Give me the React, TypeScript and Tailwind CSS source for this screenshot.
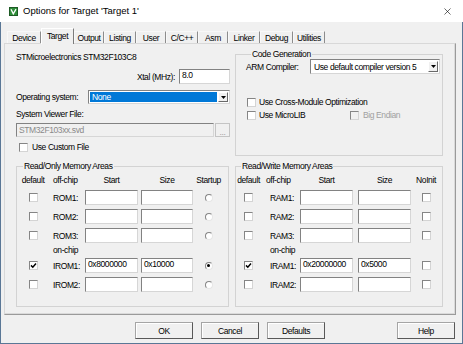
import React from 'react';
import { X } from 'lucide-react';

type Row = { label: string; start?: string; size?: string; def?: boolean; flag?: boolean };

const tabs = [
  { name: 'Device', w: 'w-[34px]' },
  { name: 'Target', w: 'w-[33px]' },
  { name: 'Output', w: 'w-[30px]' },
  { name: 'Listing', w: 'w-[32px]' },
  { name: 'User', w: 'w-[30px]' },
  { name: 'C/C++', w: 'w-[32px]' },
  { name: 'Asm', w: 'w-[30px]' },
  { name: 'Linker', w: 'w-[32px]' },
  { name: 'Debug', w: 'w-[33px]' },
  { name: 'Utilities', w: 'w-[32px]' },
];

const roOff: Row[] = [{ label: 'ROM1:' }, { label: 'ROM2:' }, { label: 'ROM3:' }];
const roOn: Row[] = [
  { label: 'IROM1:', start: '0x8000000', size: '0x10000', def: true, flag: true },
  { label: 'IROM2:' },
];
const rwOff: Row[] = [{ label: 'RAM1:' }, { label: 'RAM2:' }, { label: 'RAM3:' }];
const rwOn: Row[] = [
  { label: 'IRAM1:', start: '0x20000000', size: '0x5000', def: true },
  { label: 'IRAM2:' },
];

function Check({ checked = false, disabled = false }: { checked?: boolean; disabled?: boolean }) {
  return (
    <span
      className={`block w-[9px] h-[9px] border border-t-[#858585] border-l-[#858585] border-r-[#d4d4d4] border-b-[#d4d4d4] ${
        disabled ? 'bg-[#f0f0f0]' : 'bg-white'
      }`}
    >
      {checked && (
        <svg viewBox="0 0 7 7" className="block w-full h-full">
          <path d="M1 3.4 L2.8 5.2 L6 1.6" stroke="#000" strokeWidth="1.5" fill="none" />
        </svg>
      )}
    </span>
  );
}

function Radio({ checked = false }: { checked?: boolean }) {
  return (
    <span className="flex items-center justify-center w-[8px] h-[8px] rounded-full border border-t-[#858585] border-l-[#858585] border-r-[#e6e6e6] border-b-[#e6e6e6] bg-white">
      {checked && <span className="block w-[3px] h-[3px] rounded-full bg-black" />}
    </span>
  );
}

function Edit({ value, className = '', disabled = false }: { value?: string; className?: string; disabled?: boolean }) {
  return (
    <div
      className={`border border-t-[#828282] border-l-[#828282] border-r-[#d6d6d6] border-b-[#d6d6d6] pl-[2px] leading-[10px] overflow-hidden whitespace-nowrap ${
        disabled ? 'bg-[#f0f0f0] text-[#8a8a8a]' : 'bg-white'
      } ${className}`}
    >
      {value}
    </div>
  );
}

function Combo({ value, className = '', selected = false }: { value: string; className?: string; selected?: boolean }) {
  return (
    <div
      className={`flex border border-t-[#828282] border-l-[#828282] border-r-[#d6d6d6] border-b-[#d6d6d6] bg-white p-[1px] ${className}`}
    >
      <div className={`flex-1 flex items-center pl-[2px] ${selected ? 'bg-[#0078d7] text-white' : ''}`}>{value}</div>
      <div className="w-[10px] ml-[1px] flex items-center justify-center bg-[#f0f0f0] border border-t-white border-l-white border-r-[#696969] border-b-[#696969]">
        <svg width="5" height="3" viewBox="0 0 5 3">
          <path d="M0 0h5L2.5 3z" fill="#000" />
        </svg>
      </div>
    </div>
  );
}

function Group({ title, className = '', children }: { title: string; className?: string; children: React.ReactNode }) {
  return (
    <fieldset className={`border border-[#d3d3d3] ${className}`}>
      <legend className="ml-[5px] px-[1px] leading-[10px]">{title}</legend>
      {children}
    </fieldset>
  );
}

function Btn({ children, className = '' }: { children: React.ReactNode; className?: string }) {
  return (
    <div
      className={`h-[17px] w-[58px] flex items-center justify-center bg-[#f0f0f0] border border-[#a5a5a5] border-r-[#585858] border-b-[#585858] shadow-[inset_1px_1px_0_#ffffff] ${className}`}
    >
      {children}
    </div>
  );
}

function MemArea({ title, kind, off, on, className = '' }: { title: string; kind: 'ro' | 'rw'; off: Row[]; on: Row[]; className?: string }) {
  const ro = kind === 'ro';
  const cols = ro
    ? 'grid grid-cols-[30px_37px_56px_54px_27px] items-center'
    : 'grid grid-cols-[25px_39px_58px_58px_20px] items-center';
  const labelPad = ro ? 'pl-[5px]' : 'pl-[9px]';
  const sizeW = ro ? 'w-[52px]' : 'w-[53px]';

  const row = (r: Row, mt: string) => (
    <div key={r.label} className={`${cols} h-[15px] ${mt}`}>
      <div className="flex justify-center">
        <Check checked={r.def} />
      </div>
      <div className={`${labelPad} leading-[10px]`}>{r.label}</div>
      <Edit className="w-[53px] h-[15px]" value={r.start} />
      <Edit className={`${sizeW} h-[15px]`} value={r.size} />
      <div className="flex justify-center">{ro ? <Radio checked={r.flag} /> : <Check />}</div>
    </div>
  );

  return (
    <Group title={title} className={`${ro ? 'pl-[1px]' : ''} pb-[14px] ${className}`}>
      <div className={`${cols} h-[10px] leading-[10px] mt-[4px]`}>
        <div className="text-center">default</div>
        <div className="pl-[5px]">off-chip</div>
        <div className="w-[53px] text-center">Start</div>
        <div className={`${sizeW} text-center`}>Size</div>
        <div className="text-center">{ro ? 'Startup' : 'NoInit'}</div>
      </div>
      {off.map((r, i) => row(r, i === 0 ? 'mt-[5px]' : 'mt-[4px]'))}
      <div className={`${cols} h-[10px] leading-[10px] mt-[2px]`}>
        <div />
        <div className={labelPad}>on-chip</div>
      </div>
      {on.map((r, i) => row(r, i === 0 ? 'mt-[3px]' : 'mt-[4px]'))}
    </Group>
  );
}

export default function App() {
  return (
    <div className="w-[463px] h-[344px] flex flex-col bg-[#f0f0f0] text-black font-[family-name:Liberation_Sans,Arial,sans-serif] overflow-hidden">
      {/* Title bar */}
      <div className="h-[22px] shrink-0 bg-white flex items-center pl-[9px] pr-[10px]">
        <svg width="9" height="9" viewBox="0 0 9 9">
          <rect x="0.5" y="0.5" width="8" height="8" fill="#2f8f3a" stroke="#1d5a25" />
          <path d="M2 2.2 L4.3 6.8 L7 2.2" stroke="#fff" strokeWidth="1.3" fill="none" />
        </svg>
        <span className="ml-[5px] text-[9.5px] leading-[12px]">Options for Target 'Target 1'</span>
        <X className="ml-auto" size={11} strokeWidth={1.3} />
      </div>

      {/* Body */}
      <div className="flex-1 flex flex-col border-x border-b border-[#5a7796] text-[8.5px] tracking-[-0.4px] leading-[10px]">
        {/* Tabs */}
        <div className="h-[21px] shrink-0 flex items-end pl-[6px]">
          {tabs.map((t) =>
            t.name === 'Target' ? (
              <div
                key={t.name}
                className={`${t.w} h-[16px] -mb-[1px] relative z-10 bg-[#f0f0f0] flex items-start justify-center pt-[2px] border-t border-l border-r border-t-white border-l-white border-r-[#7c7c7c]`}
              >
                {t.name}
              </div>
            ) : (
              <div
                key={t.name}
                className={`${t.w} h-[12px] flex items-center justify-center border-t border-l border-r border-t-[#f8f8f8] border-l-[#f8f8f8] border-r-[#8c8c8c]`}
              >
                {t.name}
              </div>
            )
          )}
        </div>

        {/* Tab page */}
        <div className="ml-[3px] mr-[6px] h-[272px] shrink-0 border border-t-[#d8d8d8] border-l-[#d8d8d8] border-r-[#9a9a9a] border-b-[#9a9a9a] shadow-[inset_-1px_-1px_0_#dadada]">
          <div className="flex items-start pt-[5px] pl-[11px]">
            {/* Left column */}
            <div className="w-[214px] pt-[3px] flex flex-col">
              <div className="h-[10px]">STMicroelectronics STM32F103C8</div>
              <div className="mt-[7px] h-[15px] flex items-center justify-end">
                <span>Xtal (MHz):</span>
                <Edit className="ml-[4px] w-[51px] h-[15px]" value="8.0" />
              </div>
              <div className="mt-[6px] h-[14px] flex items-center justify-between">
                <span>Operating system:</span>
                <Combo className="w-[142px] h-[14px]" value="None" selected />
              </div>
              <div className="mt-[5px] h-[10px]">System Viewer File:</div>
              <div className="mt-[4px] h-[14px] flex">
                <Edit className="w-[198px] h-[14px] pt-[1px]" value="STM32F103xx.svd" disabled />
                <div className="ml-[1px] w-[15px] h-[14px] flex items-end justify-center bg-[#f0f0f0] border border-[#c4c4c4] text-[#a0a0a0] leading-[8px]">
                  ...
                </div>
              </div>
              <div className="mt-[5px] h-[10px] flex items-center pl-[3px]">
                <Check />
                <span className="ml-[4px]">Use Custom File</span>
              </div>
            </div>

            {/* Code Generation */}
            <Group title="Code Generation" className="ml-[5px] w-[208px] pl-[10px] pr-[2px] pb-[35px]">
              <div className="h-[15px] flex items-center">
                <span className="w-[64px]">ARM Compiler:</span>
                <Combo className="w-[130px] h-[15px]" value="Use default compiler version 5" />
              </div>
              <div className="mt-[23px] h-[10px] flex items-center pl-[1px]">
                <Check />
                <span className="ml-[3px]">Use Cross-Module Optimization</span>
              </div>
              <div className="mt-[3px] h-[10px] flex items-center pl-[1px]">
                <div className="w-[103px] flex items-center">
                  <Check />
                  <span className="ml-[3px]">Use MicroLIB</span>
                </div>
                <Check disabled />
                <span className="ml-[4px] text-[#a0a0a0]">Big Endian</span>
              </div>
            </Group>
          </div>

          {/* Memory areas */}
          <div className="flex items-start pl-[11px] mt-[5px]">
            <MemArea title="Read/Only Memory Areas" kind="ro" off={roOff} on={roOn} className="w-[213px]" />
            <MemArea title="Read/Write Memory Areas" kind="rw" off={rwOff} on={rwOn} className="ml-[6px] w-[208px]" />
          </div>
        </div>

        {/* Buttons */}
        <div className="mt-[7px] flex pl-[134px] pr-[7px]">
          <Btn>OK</Btn>
          <Btn className="ml-[8px]">Cancel</Btn>
          <Btn className="ml-[8px]">Defaults</Btn>
          <Btn className="ml-auto">Help</Btn>
        </div>
      </div>
    </div>
  );
}
